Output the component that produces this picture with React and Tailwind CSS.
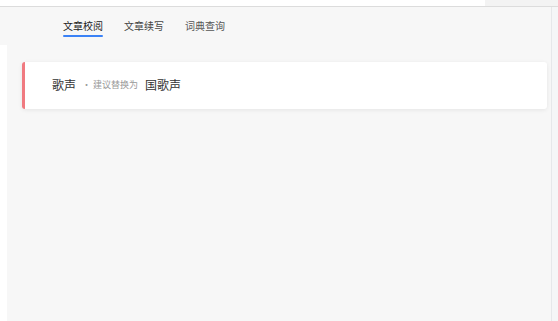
export default function App() {
  return (
    <div
      className="w-[558px] h-[321px] bg-[#f7f7f7] flex flex-col overflow-hidden"
      style={{ fontFamily: '"Noto Sans CJK SC", "Noto Sans", sans-serif' }}
    >
      <div className="h-[7px] flex border-b border-[#dcdcdc] shrink-0">
        <div className="w-[485px] bg-white" />
        <div className="flex-1 bg-[#f3f3f3]" />
      </div>
      <div className="flex flex-1">
        <div className="w-[7px] flex flex-col">
          <div className="h-[38px]" />
          <div className="flex-1 bg-white" />
        </div>
        <div className="flex-1 flex flex-col">
          <div className="flex gap-[21px] pl-[56px] pt-[11px] text-[10px] text-[#333]">
            <div className="flex flex-col items-center">
              <span className="leading-[16px] text-[#222]">文章校阅</span>
              <div className="mt-[1px] h-[2px] w-full bg-[#3b82f6] rounded" />
            </div>
            <span className="leading-[16px] text-[#444]">文章续写</span>
            <span className="leading-[16px] text-[#555]">词典查询</span>
          </div>
          <div className="mt-[25px] ml-[15px] mr-[4px] h-[47px] bg-white rounded-[3px] border-l-[3px] border-[#f07a80] shadow-[0_1px_4px_rgba(0,0,0,0.08)] flex items-center pl-[27px] pb-[2px]">
            <span className="text-[12px] text-[#333]">歌声</span>
            <span className="ml-[6px] text-[9px] text-[#999]">· 建议替换为</span>
            <span className="ml-[7px] text-[12px] text-[#333]">国歌声</span>
          </div>
        </div>
        <div className="w-[7px] border-l border-[#e6e8ea] bg-[#f5f6f7]" />
      </div>
    </div>
  );
}
